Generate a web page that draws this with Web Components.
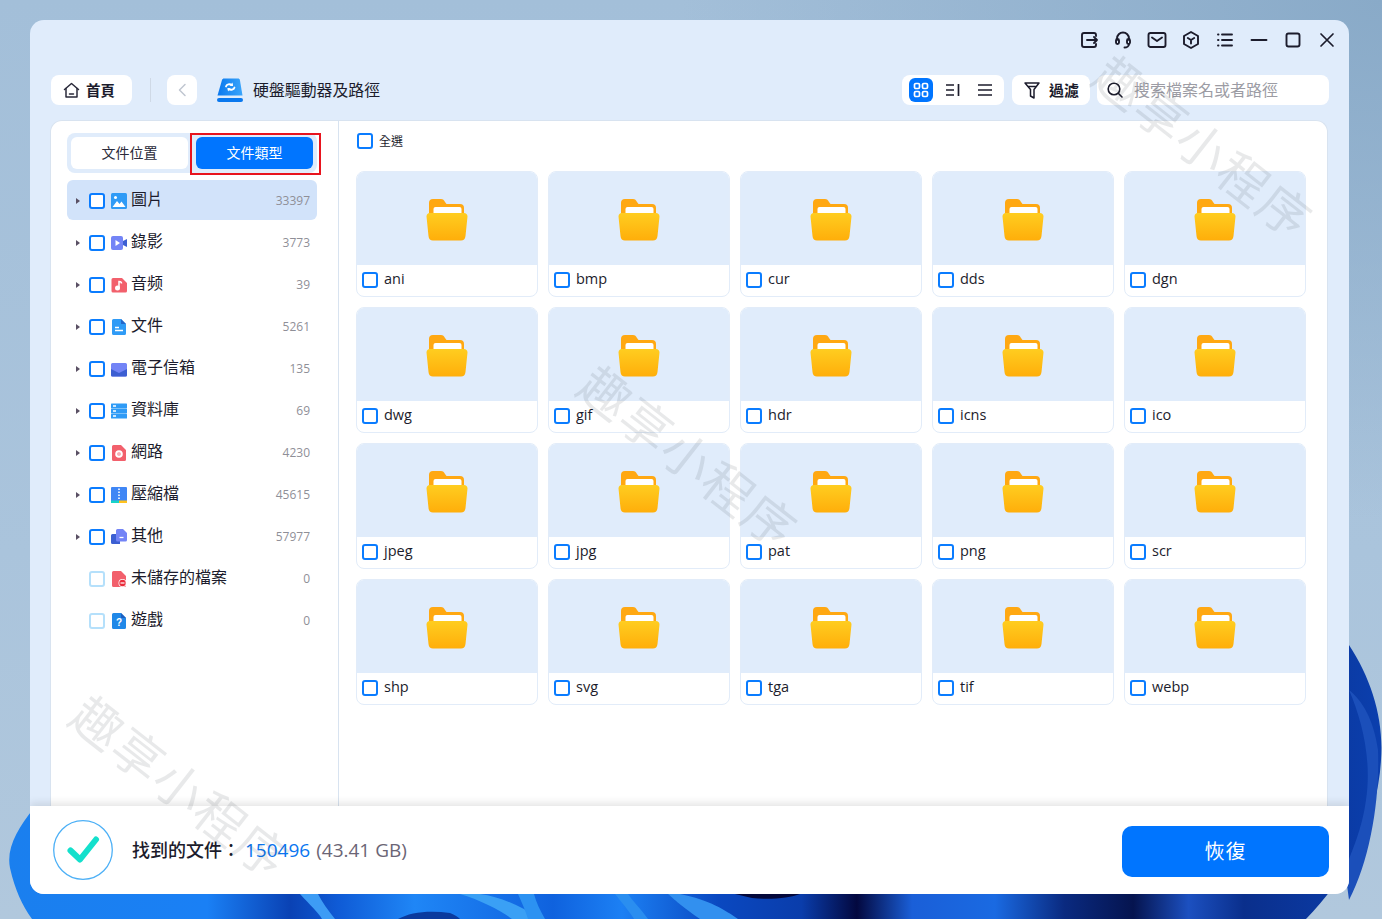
<!DOCTYPE html>
<html>
<head>
<meta charset="utf-8">
<style>
  html, body { margin: 0; padding: 0; height: 100%; overflow: hidden; }
  body { font-family: "Open Sans", "Noto Sans CJK TC", sans-serif; }
</style>
</head>
<body>
<desk-top>
  <app-window>
    <title-bar slot="title"></title-bar>
    <tool-bar slot="tools"></tool-bar>
    <side-bar slot="side"></side-bar>
    <file-grid slot="main"></file-grid>
    <result-bar slot="footer"></result-bar>
  </app-window>
</desk-top>

<script>
const FONT = '"Open Sans", "Noto Sans CJK TC", sans-serif';

// line icons, 20x20
const line = body => `<svg width="20" height="20" viewBox="0 0 20 20" fill="none" stroke="#1c1c2c" stroke-width="1.9" stroke-linecap="round" stroke-linejoin="round">${body}</svg>`;

const windowIcons = [
  '<path d="M17 6V5a2 2 0 0 0-2-2H5a2 2 0 0 0-2 2v10a2 2 0 0 0 2 2h10a2 2 0 0 0 2-2v-1"/><path d="M8 10h10M15 7l3 3-3 3"/>',
  '<path d="M4 10V8.500a6 6 0 0 1 12 0V10"/><rect x="3" y="9" width="3" height="5" rx="1.500"/><rect x="14" y="9" width="3" height="5" rx="1.500"/><path d="M16 14c0 2-2 3.500-4.500 3.500"/>',
  '<rect x="1.500" y="3" width="17" height="14" rx="2"/><path d="M5 7.500 10 11l5-3.500"/>',
  '<path d="M10 2l7 4v8l-7 4-7-4V6z"/><path d="M6.800 8 10 10l3.200-2M10 10v3.500"/>',
  '<path d="M3 4.500h.5M3 10h.5M3 15.500h.5M7 4.500h10M7 10h10M7 15.500h10"/>',
  '<path d="M2.500 10h15"/>',
  '<rect x="3.500" y="3.500" width="13" height="13" rx="2"/>',
  '<path d="M4 4l12 12M16 4 4 16" stroke-width="1.700"/>'
];

// small colour icons for the sidebar, 16x16
const typeIcons = {
  image: '<rect width="16" height="16" rx="1.500" fill="#2f9bf6"/><circle cx="4.500" cy="4.500" r="1.500" fill="#fff"/><path d="M1.500 14l4.500-6 2.500 3 2-2.500 4 5.500z" fill="#fff"/>',
  video: '<rect y="1" width="12" height="14" rx="2" fill="#7384f6"/><path d="M4.500 5v6l4.500-3z" fill="#fff"/><path d="M12 6l4-2v8l-4-2z" fill="#3c5fd2"/>',
  audio: '<path d="M2 1h9l5 5v8a1.500 1.500 0 0 1-1.500 1.500H2A1.500 1.500 0 0 1 .5 14V2.500A1.500 1.500 0 0 1 2 1z" fill="#f2606c"/><circle cx="6.500" cy="11" r="2.500" fill="#fff"/><path d="M8 11V4.500c1 0 2.500.5 2.500 2" stroke="#fff" stroke-width="1.500" fill="none"/>',
  doc: '<path d="M2.500 0H10l5 5v9.500a1.500 1.500 0 0 1-1.500 1.500h-11A1.500 1.500 0 0 1 1 14.500v-13A1.500 1.500 0 0 1 2.500 0z" fill="#2f9bf6"/><path d="M10 0l5 5h-5z" fill="#2467c9"/><path d="M4 8.500h4M4 11.500h8" stroke="#fff" stroke-width="1.300"/>',
  mail: '<path d="M0 3.500A1.500 1.500 0 0 1 1.500 2h13A1.500 1.500 0 0 1 16 3.500V14a1.500 1.500 0 0 1-1.500 1.500h-13A1.500 1.500 0 0 1 0 14z" fill="#7384f6"/><path d="M0 8l8 4 8-4v6a1.500 1.500 0 0 1-1.500 1.500h-13A1.500 1.500 0 0 1 0 14z" fill="#3c5fd2"/>',
  db: '<rect width="16" height="4.800" y=".5" fill="#2f9bf6" rx=".6"/><rect width="16" height="4.800" y="5.600" fill="#2f9bf6" rx=".6"/><rect width="16" height="4.800" y="10.700" fill="#2f9bf6" rx=".6"/><path d="M2 3h3M2 8h3M2 13h3" stroke="#fff" stroke-width="1.300"/>',
  web: '<path d="M2.500 0H10l5 5v9.500a1.500 1.500 0 0 1-1.500 1.500h-11A1.500 1.500 0 0 1 1 14.500v-13A1.500 1.500 0 0 1 2.500 0z" fill="#f2606c"/><circle cx="8" cy="9" r="3.800" fill="#fff"/><circle cx="8" cy="9" r="1.800" fill="#f2606c"/><path d="M8 6.500v5M5.500 9h5" stroke="#fff" stroke-width=".6"/>',
  zip: '<rect width="16" height="16" rx="1" fill="#3f86f5"/><rect y="13.500" width="8" height="2.500" fill="#17d4c8"/><rect x="8" y="13.500" width="8" height="2.500" fill="#ffc21f"/><path d="M8 1.500v1.500M8 4.500V6M8 7.500V9M8 10.500V12" stroke="#fff" stroke-width="1.600"/>',
  other: '<path d="M1.500 5H9v10H1.500A1.500 1.500 0 0 1 0 13.500v-7A1.500 1.500 0 0 1 1.500 5z" fill="#3c5fd2"/><path d="M6.500 0H12l4 4v7a1.500 1.500 0 0 1-1.500 1.500h-8A1.500 1.500 0 0 1 5 11V1.500A1.500 1.500 0 0 1 6.500 0z" fill="#7384f6"/><path d="M8.500 8.500h4" stroke="#fff" stroke-width="1.300"/>',
  lost: '<path d="M2.500 0H10l5 5v9.500a1.500 1.500 0 0 1-1.500 1.500h-11A1.500 1.500 0 0 1 1 14.500v-13A1.500 1.500 0 0 1 2.500 0z" fill="#f2606c"/><circle cx="11.500" cy="12" r="4" fill="#fff"/><circle cx="11.500" cy="12" r="3.200" fill="#ea2d3c"/><path d="M9.500 12h4" stroke="#fff" stroke-width="1.200"/>',
  game: '<path d="M2.500 0H10l5 5v9.500a1.500 1.500 0 0 1-1.500 1.500h-11A1.500 1.500 0 0 1 1 14.500v-13A1.500 1.500 0 0 1 2.500 0z" fill="#2088e8"/><path d="M10 0l5 5h-5z" fill="#1c5fc0"/><text x="8" y="13" text-anchor="middle" font-size="10" font-weight="700" fill="#fff" font-family="Liberation Sans, sans-serif">?</text>'
};

class DeskTop extends HTMLElement {
  constructor() {
    super();
    this.attachShadow({ mode: 'open' });
    this.shadowRoot.innerHTML = `
      <style>
        :host { display: block; width: 1382px; height: 919px; position: relative; overflow: hidden; background: radial-gradient(700px 520px at 100% 0, #89aac8, rgba(137, 170, 200, 0)), linear-gradient(180deg, #a3bfd9 0%, #aac4dc 60%, #b1c8dd 100%); box-sizing: border-box; padding: 20px 33px 25px 30px; font-family: ${FONT}; }
        svg.bg { position: absolute; inset: 0; }
        ::slotted(*) { position: relative; }
        .wm { position: absolute; z-index: 5; pointer-events: none; font-size: 50px; line-height: 60px; font-weight: 400; white-space: nowrap; letter-spacing: 2px; color: rgba(30, 35, 45, .1); transform: translate(-50%, -50%) rotate(38deg); font-family: "Noto Sans CJK TC", sans-serif; }
      </style>
      <svg class="bg" width="1382" height="919" viewBox="0 0 1382 919">
        <defs>
          <linearGradient id="b1" gradientUnits="userSpaceOnUse" x1="0" y1="0" x2="1382" y2="0">
            <stop offset="0" stop-color="#1a7fee"/>
            <stop offset=".15" stop-color="#1a80f5"/>
            <stop offset=".21" stop-color="#0a42b4"/>
            <stop offset=".245" stop-color="#0f5bd6"/>
            <stop offset=".3" stop-color="#1f86f6"/>
            <stop offset=".4" stop-color="#0f62de"/>
            <stop offset=".45" stop-color="#1c80f4"/>
            <stop offset=".52" stop-color="#0a48c0"/>
            <stop offset=".58" stop-color="#0a3dab"/>
            <stop offset=".62" stop-color="#03083f"/>
            <stop offset=".66" stop-color="#1a5fd8"/>
            <stop offset=".72" stop-color="#1a6ae2"/>
            <stop offset=".77" stop-color="#0a2a80"/>
            <stop offset=".82" stop-color="#05144f"/>
            <stop offset=".86" stop-color="#1c50c0"/>
            <stop offset=".9" stop-color="#0a2f8c"/>
            <stop offset="1" stop-color="#0b3fae"/>
          </linearGradient>
        </defs>
        <path d="M32 919C22 905 15 890 10 868 6 848 18 828 34 808L1340 780 1349 645C1372 680 1384 720 1381 760 1378 820 1345 880 1306 919Z" fill="url(#b1)"/>
        <path d="M1349 690C1362 720 1372 760 1366 800 1362 830 1352 850 1345 870L1349 900C1370 860 1380 800 1378 750 1374 720 1362 700 1349 690Z" fill="#1b4fba"/>
        <path d="M300 894C310 905 318 912 322 919H335C328 910 322 902 318 894Z" fill="#3d9cf5"/>
        <path d="M398 919C410 912 430 910 450 913 455 915 458 917 460 919Z" fill="#0a3a9e"/>
        <path d="M460 894C480 900 500 910 512 919H540C520 905 500 897 480 894Z" fill="#3aa0f5"/>
        <path d="M518 894C522 903 526 912 528 919H545C540 910 536 902 534 894Z" fill="#2c92f2"/>
        <path d="M615 894C622 903 630 912 634 919H648C640 908 632 900 628 894Z" fill="#2a8ef0"/>
        <path d="M680 894C710 900 725 910 738 919H700C680 905 675 900 668 894Z" fill="#3290ef"/>
        <path d="M735 894H800C790 898 770 900 752 898Z" fill="#04083a"/>
      </svg>
      <slot></slot>
      <div class="wm" style="left:1205px;top:145px">趣享小程序</div>
      <div class="wm" style="left:690px;top:455px">趣享小程序</div>
      <div class="wm" style="left:182px;top:785px">趣享小程序</div>`;
  }
}

class AppWindow extends HTMLElement {
  constructor() {
    super();
    this.attachShadow({ mode: 'open' });
    this.shadowRoot.innerHTML = `
      <style>
        :host { display: flex; flex-direction: column; width: 1319px; height: 874px; background: #e0ecfb; border-radius: 14px; overflow: hidden; }
        .panel { flex: 1; min-height: 0; display: flex; margin: 15px 21px 0 20px; background: #fff; border: 1px solid #d8e3f0; border-bottom: 0; border-radius: 12px 12px 0 0; }
        .main { flex: 1; min-width: 0; }
      </style>
      <slot name="title"></slot>
      <slot name="tools"></slot>
      <div class="panel">
        <slot name="side"></slot>
        <div class="main"><slot name="main"></slot></div>
      </div>
      <slot name="footer"></slot>`;
  }
}

class TitleBar extends HTMLElement {
  constructor() {
    super();
    this.attachShadow({ mode: 'open' });
    this.shadowRoot.innerHTML = `
      <style>
        :host { display: flex; justify-content: flex-end; gap: 14px; align-items: center; height: 40px; padding-right: 12px; flex: none; }
        svg { display: block; }
      </style>
      ${windowIcons.map(line).join('')}`;
  }
}

class ToolBar extends HTMLElement {
  constructor() {
    super();
    this.attachShadow({ mode: 'open' });
    this.shadowRoot.innerHTML = `
      <style>
        :host { display: flex; align-items: center; height: 30px; margin: 15px 20px 0 21px; flex: none; color: #1c1c2c; }
        .btn { background: #fff; border-radius: 8px; height: 30px; display: flex; align-items: center; box-sizing: border-box; }
        .btn span, .title { position: relative; top: -1px; }
        .home { width: 81px; padding-left: 12px; gap: 6px; font-size: 14.500px; font-weight: 700; }
        .sep { width: 1px; height: 24px; background: #cfd9e6; margin: 0 16px 0 18px; }
        .back { width: 30px; justify-content: center; }
        .logo { margin-left: 20px; display: block; }
        .title { margin-left: 10px; font-size: 15.900px; flex: 1; }
        .views { width: 102px; padding-left: 7px; }
        .views .on { width: 24px; height: 24px; background: #0075ff; border-radius: 6px; display: flex; align-items: center; justify-content: center; }
        .views svg.v2 { margin-left: 12px; }
        .views svg.v3 { margin-left: 18px; }
        .filter { width: 78px; margin-left: 8px; padding-left: 11px; gap: 8px; font-size: 15px; font-weight: 700; }
        .search { width: 232px; margin-left: 7px; padding-left: 9px; gap: 10px; font-size: 16px; color: #9c9ca4; }
      </style>
      <div class="btn home">
        <svg width="17" height="17" viewBox="0 0 17 17" fill="none" stroke="#2a2a3a" stroke-width="1.500" stroke-linejoin="round" stroke-linecap="round"><path d="M1.500 7.500 8.500 1.500l7 6"/><path d="M3 6.500V15h11V6.500"/><path d="M6.500 12h4"/></svg>
        <span>首頁</span>
      </div>
      <div class="sep"></div>
      <div class="btn back">
        <svg width="10" height="14" viewBox="0 0 10 14" fill="none" stroke="#c0c6d0" stroke-width="1.500" stroke-linecap="round" stroke-linejoin="round"><path d="M8 1.500 2.500 7 8 12.500"/></svg>
      </div>
      <svg class="logo" width="26" height="26" viewBox="0 0 26 26">
        <defs><linearGradient id="lg" x1="0" y1="0" x2="1" y2="0"><stop offset="0" stop-color="#0a78ee"/><stop offset="1" stop-color="#3aa5fb"/></linearGradient></defs>
        <path d="M5 2.500C5.300 1.500 6 1 7 1h14c1 0 1.700.5 1.900 1.500L25.500 18h-25z" fill="url(#lg)" transform="translate(0 .5)"/>
        <rect y="21" width="26" height="4" rx="2" fill="#0a78ee"/>
        <path d="M9 9.500c.5-2 3.500-3 6-1.500M17.500 10.500c-.5 2-3.500 3-6 1.500" fill="none" stroke="#fff" stroke-width="1.800" stroke-linecap="round"/>
        <path d="M15.500 5.500 16 9l-3.300-.2zM11 14.500 10.500 11l3.300.2z" fill="#fff"/>
      </svg>
      <div class="title">硬盤驅動器及路徑</div>
      <div class="btn views">
        <div class="on"><svg width="16" height="16" viewBox="0 0 16 16" fill="none" stroke="#fff" stroke-width="1.700"><rect x="1.500" y="1.500" width="5" height="5" rx="1.300"/><rect x="9.500" y="1.500" width="5" height="5" rx="1.300"/><rect x="1.500" y="9.500" width="5" height="5" rx="1.300"/><rect x="9.500" y="9.500" width="5" height="5" rx="1.300"/></svg></div>
        <svg class="v2" width="15" height="14" viewBox="0 0 15 14" fill="none" stroke="#1c1c2c" stroke-width="1.700"><path d="M1 2h8M1 7h8M1 12h8M13.500 1v12"/></svg>
        <svg class="v3" width="14" height="14" viewBox="0 0 14 14" fill="none" stroke="#1c1c2c" stroke-width="1.700"><path d="M0 2h14M0 7h14M0 12h14"/></svg>
      </div>
      <div class="btn filter">
        <svg width="18" height="18" viewBox="0 0 18 18" fill="none" stroke="#1c1c2c" stroke-width="1.500" stroke-linejoin="round" stroke-linecap="round"><path d="M2 2h14L11 8.500V17l-3.500-2V8.500z"/><path d="M5.500 5.500h7"/></svg>
        <span>過濾</span>
      </div>
      <div class="btn search">
        <svg width="18" height="18" viewBox="0 0 18 18" fill="none" stroke="#1c1c2c" stroke-width="1.600" stroke-linecap="round"><circle cx="8" cy="8" r="5.800"/><path d="M12.500 12.500 16 16"/></svg>
        <span>搜索檔案名或者路徑</span>
      </div>`;
  }
}

class TickBox extends HTMLElement {
  constructor() {
    super();
    this.attachShadow({ mode: 'open' });
    this.shadowRoot.innerHTML = `
      <style>
        :host { display: block; width: 16px; height: 16px; box-sizing: border-box; border: 2px solid #0a7cff; border-radius: 3px; background: #fff; flex: none; }
        :host([off]) { border-color: #b5e0fb; }
      </style>`;
  }
}

class TypeRow extends HTMLElement {
  constructor() {
    super();
    this.attachShadow({ mode: 'open' });
  }
  connectedCallback() {
    const icon = typeIcons[this.getAttribute('icon')];
    const leaf = this.hasAttribute('leaf');
    this.shadowRoot.innerHTML = `
      <style>
        :host { display: flex; align-items: center; height: 40px; border-radius: 6px; color: #1c1c2c; box-sizing: border-box; padding: 2px 7px 0 8px; }
        :host([active]) { background: #d2e3fa; }
        .arrow { width: 0; height: 0; border-left: 4px solid #5a5064; border-top: 3.500px solid transparent; border-bottom: 3.500px solid transparent; margin-right: 9px; margin-left: 1px; }
        .arrow.none { visibility: hidden; }
        svg { display: block; margin: 0 5px 0 6px; flex: none; }
        .label { font-size: 16px; flex: 1; margin-top: -6px; margin-left: -1px; }
        .count { font-size: 12px; color: #8f8f97; margin-top: -2px; }
      </style>
      <span class="arrow ${leaf ? 'none' : ''}"></span>
      <tick-box ${leaf ? 'off' : ''}></tick-box>
      <svg width="16" height="16" viewBox="0 0 16 16">${icon}</svg>
      <span class="label">${this.getAttribute('label')}</span>
      <span class="count">${this.getAttribute('count')}</span>`;
  }
}

const types = [
  ['image', '圖片', 33397],
  ['video', '錄影', 3773],
  ['audio', '音频', 39],
  ['doc', '文件', 5261],
  ['mail', '電子信箱', 135],
  ['db', '資料庫', 69],
  ['web', '網路', 4230],
  ['zip', '壓縮檔', 45615],
  ['other', '其他', 57977],
  ['lost', '未儲存的檔案', 0],
  ['game', '遊戲', 0]
];

class SideBar extends HTMLElement {
  constructor() {
    super();
    this.attachShadow({ mode: 'open' });
    this.shadowRoot.innerHTML = `
      <style>
        :host { display: block; width: 288px; flex: none; box-sizing: border-box; border-right: 1px solid #d8e3f0; padding: 12px 21px 0 16px; height: 100%; }
        .tabs { position: relative; display: flex; gap: 8px; padding: 4px; background: #e0ecfb; border-radius: 8px; }
        .tab { flex: 1; height: 32px; border-radius: 6px; background: #fff; display: flex; align-items: center; justify-content: center; font-size: 14px; padding-bottom: 2px; box-sizing: border-box; color: #2a2a3a; }
        .tab.on { background: #0075ff; color: #fff; }
        .mark { position: absolute; left: 123px; top: 0; width: 127px; height: 38px; border: 2px solid #e8141e; pointer-events: none; }
        .rows { display: flex; flex-direction: column; gap: 2px; margin-top: 7px; }
      </style>
      <div class="tabs">
        <div class="tab">文件位置</div>
        <div class="tab on">文件類型</div>
        <div class="mark"></div>
      </div>
      <div class="rows">
        ${types.map((t, i) => `<type-row icon="${t[0]}" label="${t[1]}" count="${t[2]}" ${i === 0 ? 'active' : ''} ${i > 8 ? 'leaf' : ''}></type-row>`).join('')}
      </div>`;
  }
}

class FolderCard extends HTMLElement {
  constructor() {
    super();
    this.attachShadow({ mode: 'open' });
  }
  connectedCallback() {
    const id = 'f' + this.getAttribute('name');
    this.shadowRoot.innerHTML = `
      <style>
        :host { display: block; height: 126px; box-sizing: border-box; border: 1px solid #e2ecf9; border-radius: 8px; overflow: hidden; background: #fff; }
        .thumb { margin: -1px -1px 0; height: 94px; background: #e0ecfb; display: flex; align-items: center; justify-content: center; padding-top: 3px; box-sizing: border-box; }
        .foot { display: flex; align-items: center; gap: 6px; padding-left: 5px; height: 30px; font-size: 14.500px; color: #1c1c2c; }
        .foot span { position: relative; top: -2px; }
        svg { display: block; }
      </style>
      <div class="thumb">
        <svg width="42" height="44" viewBox="0 0 42 44">
          <defs><linearGradient id="${id}" x1="0" y1="0" x2="0" y2="1"><stop offset="0" stop-color="#ffcd20"/><stop offset="1" stop-color="#ffae0a"/></linearGradient></defs>
          <path d="M3 5a4 4 0 0 1 4-4h8c2 0 3 1 4 3l1.500 2H34a4 4 0 0 1 4 4v8H3z" fill="#ffa812"/>
          <rect x="7.500" y="9" width="28" height="10" rx="2" fill="#fff"/>
          <path d="M3.500 15h34.500c2 0 3.500 1.500 3.500 3.500L39.500 38c-.3 3-2 4.500-4.500 4.500H7c-2.500 0-4.300-1.500-4.500-4.500L.5 18.500C.5 16.500 2 15 3.500 15z" fill="url(#${id})"/>
        </svg>
      </div>
      <div class="foot"><tick-box></tick-box><span>${this.getAttribute('name')}</span></div>`;
  }
}

const formats = ['ani', 'bmp', 'cur', 'dds', 'dgn', 'dwg', 'gif', 'hdr', 'icns', 'ico', 'jpeg', 'jpg', 'pat', 'png', 'scr', 'shp', 'svg', 'tga', 'tif', 'webp'];

class FileGrid extends HTMLElement {
  constructor() {
    super();
    this.attachShadow({ mode: 'open' });
    this.shadowRoot.innerHTML = `
      <style>
        :host { display: block; padding: 12px 22px 0 17px; }
        .all { display: flex; align-items: center; gap: 6px; height: 16px; margin-left: 1px; font-size: 12px; color: #1c1c2c; }
        .grid { display: grid; grid-template-columns: repeat(5, 182px); gap: 10px; margin-top: 22px; }
      </style>
      <div class="all"><tick-box></tick-box><span>全選</span></div>
      <div class="grid">
        ${formats.map(f => `<folder-card name="${f}"></folder-card>`).join('')}
      </div>`;
  }
}

class ResultBar extends HTMLElement {
  constructor() {
    super();
    this.attachShadow({ mode: 'open' });
    this.shadowRoot.innerHTML = `
      <style>
        :host { display: flex; align-items: center; height: 88px; flex: none; background: #fff; padding: 0 20px 0 23px; box-shadow: 0 -3px 8px rgba(0, 0, 0, .11); position: relative; z-index: 2; }
        svg { display: block; flex: none; }
        .txt { margin-left: 19px; margin-top: -2px; font-size: 18px; font-weight: 500; color: #1c1c2c; flex: 1; display: flex; align-items: baseline; }
        .num { font-size: 19px; font-weight: 400; color: #0a75f0; margin-left: 5px; }
        .size { font-size: 19px; font-weight: 400; color: #6b6575; margin-left: 6px; }
        .go { width: 207px; height: 51px; margin-top: 2px; padding-bottom: 2px; box-sizing: border-box; border-radius: 10px; background: #0075ff; color: #fff; font-size: 20px; display: flex; align-items: center; justify-content: center; letter-spacing: 1px; }
      </style>
      <svg width="60" height="60" viewBox="0 0 60 60" fill="none">
        <circle cx="30" cy="30" r="29.300" stroke="#4db0f6" stroke-width="1.300"/>
        <path d="M17.500 30.500 27 39.500 43 19.500" stroke="#14e0cc" stroke-width="6" stroke-linecap="round" stroke-linejoin="round"/>
      </svg>
      <div class="txt"><span>找到的文件：</span><span class="num">150496</span><span class="size">(43.41 GB)</span></div>
      <div class="go">恢復</div>`;
  }
}

customElements.define('desk-top', DeskTop);
customElements.define('app-window', AppWindow);
customElements.define('title-bar', TitleBar);
customElements.define('tool-bar', ToolBar);
customElements.define('tick-box', TickBox);
customElements.define('type-row', TypeRow);
customElements.define('side-bar', SideBar);
customElements.define('folder-card', FolderCard);
customElements.define('file-grid', FileGrid);
customElements.define('result-bar', ResultBar);
</script>
</body>
</html>
